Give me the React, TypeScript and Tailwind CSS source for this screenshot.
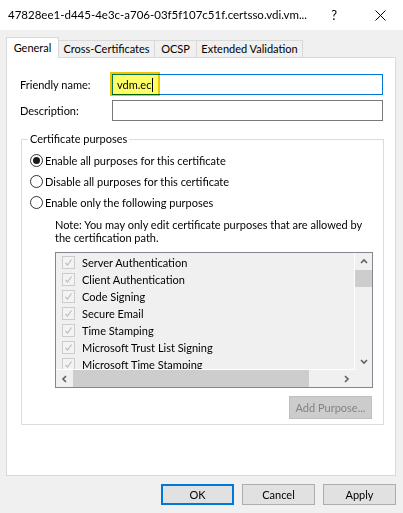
import React from "react";

const items = [
  "Server Authentication",
  "Client Authentication",
  "Code Signing",
  "Secure Email",
  "Time Stamping",
  "Microsoft Trust List Signing",
  "Microsoft Time Stamping",
];

function Chevron({ dir }: { dir: "up" | "down" | "left" | "right" }) {
  const paths: Record<string, string> = {
    up: "M1 5 L4 2 L7 5",
    down: "M1 2 L4 5 L7 2",
    left: "M5 1 L2 4 L5 7",
    right: "M2 1 L5 4 L2 7",
  };
  return (
    <svg width="8" height="8" viewBox="0 0 8 8">
      <path d={paths[dir]} fill="none" stroke="#606060" strokeWidth="1.6" />
    </svg>
  );
}

function Radio({ checked, label }: { checked?: boolean; label: string }) {
  return (
    <div className="flex h-[21px] items-center pl-[8px]">
      <div className="flex h-[13px] w-[13px] items-center justify-center rounded-full border border-[#333333] bg-white">
        {checked && <div className="h-[7px] w-[7px] rounded-full bg-[#1a1a1a]" />}
      </div>
      <span className="ml-[2px] whitespace-nowrap">{label}</span>
    </div>
  );
}

export default function App() {
  return (
    <div className="flex h-[513px] w-[403px] flex-col overflow-hidden bg-[#f0f0f0] font-['Lato','Liberation_Sans',sans-serif] text-[11px] leading-[16px] text-black">
      {/* Title bar */}
      <div className="flex h-[30px] shrink-0 items-center bg-white pl-[8px] text-[11.5px]">
        <span className="whitespace-nowrap">47828ee1-d445-4e3c-a706-03f5f107c51f.certsso.vdi.vm...</span>
        <span className="ml-auto mr-[38px] text-[13px]">?</span>
        <svg className="mr-[17px]" width="11" height="11" viewBox="0 0 11 11">
          <path d="M0.5 0.5 L10.5 10.5 M10.5 0.5 L0.5 10.5" stroke="#000" strokeWidth="1" />
        </svg>
      </div>

      {/* Tabs */}
      <div className="relative z-10 ml-[6px] mt-[7px] flex h-[20px] items-end whitespace-nowrap">
        <div className="mb-[-1px] flex h-[21px] w-[53px] items-center justify-center border-x border-t border-[#d9d9d9] bg-white pb-[1px]">
          General
        </div>
        <div className="flex h-[17px] w-[96px] items-center justify-center border-r border-t border-[#d9d9d9] bg-[#f0f0f0]">
          Cross-Certificates
        </div>
        <div className="flex h-[17px] w-[42px] items-center justify-center border-r border-t border-[#d9d9d9] bg-[#f0f0f0]">
          OCSP
        </div>
        <div className="flex h-[17px] w-[106px] items-center justify-center border-r border-t border-[#d9d9d9] bg-[#f0f0f0]">
          Extended Validation
        </div>
      </div>

      {/* Panel */}
      <div className="ml-[6px] flex h-[419px] w-[390px] flex-col border border-[#d9d9d9] bg-white">
        <div className="mt-[16px] flex h-[21px] items-center">
          <div className="w-[105px] pl-[13px]">Friendly name:</div>
          <div className="relative flex h-[21px] w-[271px] items-center border border-[#0078d7] bg-white pl-[4px]">
            <span>vdm.ec</span>
            <span className="ml-[1px] h-[14px] w-[1px] bg-black" />
            <div className="absolute left-[-3px] top-[-3px] h-[24px] w-[50px] border-2 border-[#f2c500] bg-[#fdfd66] mix-blend-multiply" />
          </div>
        </div>
        <div className="mt-[5px] flex h-[21px] items-center">
          <div className="w-[105px] pl-[13px]">Description:</div>
          <div className="h-[21px] w-[271px] border border-[#7a7a7a] bg-white" />
        </div>

        <fieldset className="ml-[14px] mt-[10px] w-[363px] border border-[#dcdcdc] px-0 pb-[5px]">
          <legend className="ml-[6px] px-[2px] leading-[16px]">Certificate purposes</legend>
          <div className="flex flex-col">
            <div className="mt-[3px]">
              <Radio checked label="Enable all purposes for this certificate" />
              <Radio label="Disable all purposes for this certificate" />
              <Radio label="Enable only the following purposes" />
            </div>
            <div className="ml-[33px] mt-[5px] whitespace-nowrap leading-[13px]">
              Note: You may only edit certificate purposes that are allowed by
              <br />
              the certification path.
            </div>
            <div className="ml-[33px] mt-[8px] grid h-[136px] w-[318px] grid-cols-[1fr_17px] grid-rows-[1fr_17px] border border-[#828790] bg-[#f0f0f0]">
              <div className="overflow-hidden border-b border-r border-white pt-[1px]">
                {items.map((t) => (
                  <div key={t} className="flex h-[17px] items-center pl-[6px]">
                    <div className="flex h-[13px] w-[13px] items-center justify-center border border-[#cccccc] bg-[#f3f3f3]">
                      <svg width="9" height="9" viewBox="0 0 9 9">
                        <path d="M1.5 4.8 L3.5 7 L7.5 1.5" fill="none" stroke="#bdbdbd" strokeWidth="1.2" />
                      </svg>
                    </div>
                    <span className="ml-[7px] whitespace-nowrap">{t}</span>
                  </div>
                ))}
              </div>
              <div className="flex flex-col">
                <div className="flex h-[17px] items-center justify-center">
                  <Chevron dir="up" />
                </div>
                <div className="h-[17px] bg-[#cdcdcd]" />
                <div className="flex-1" />
                <div className="flex h-[17px] items-center justify-center">
                  <Chevron dir="down" />
                </div>
              </div>
              <div className="flex items-center">
                <div className="flex h-[17px] w-[17px] items-center justify-center">
                  <Chevron dir="left" />
                </div>
                <div className="h-[17px] w-[236px] bg-[#cdcdcd]" />
                <div className="flex-1" />
                <div className="flex h-[17px] w-[17px] items-center justify-center">
                  <Chevron dir="right" />
                </div>
              </div>
              <div />
            </div>
            <div className="mr-[11px] mt-[8px] flex h-[23px] w-[83px] items-center justify-center self-end whitespace-nowrap border border-[#bfbfbf] bg-[#cccccc] text-[#838383]">
              Add Purpose...
            </div>
          </div>
        </fieldset>
      </div>

      {/* Bottom buttons */}
      <div className="mt-[8px] flex justify-end gap-[8px] pr-[7px]">
        <div className="flex h-[21px] w-[73px] items-center justify-center border-2 border-[#0078d7] bg-[#e1e1e1]">OK</div>
        <div className="flex h-[21px] w-[73px] items-center justify-center border border-[#adadad] bg-[#e1e1e1]">Cancel</div>
        <div className="flex h-[21px] w-[73px] items-center justify-center border border-[#adadad] bg-[#e1e1e1]">Apply</div>
      </div>
    </div>
  );
}
